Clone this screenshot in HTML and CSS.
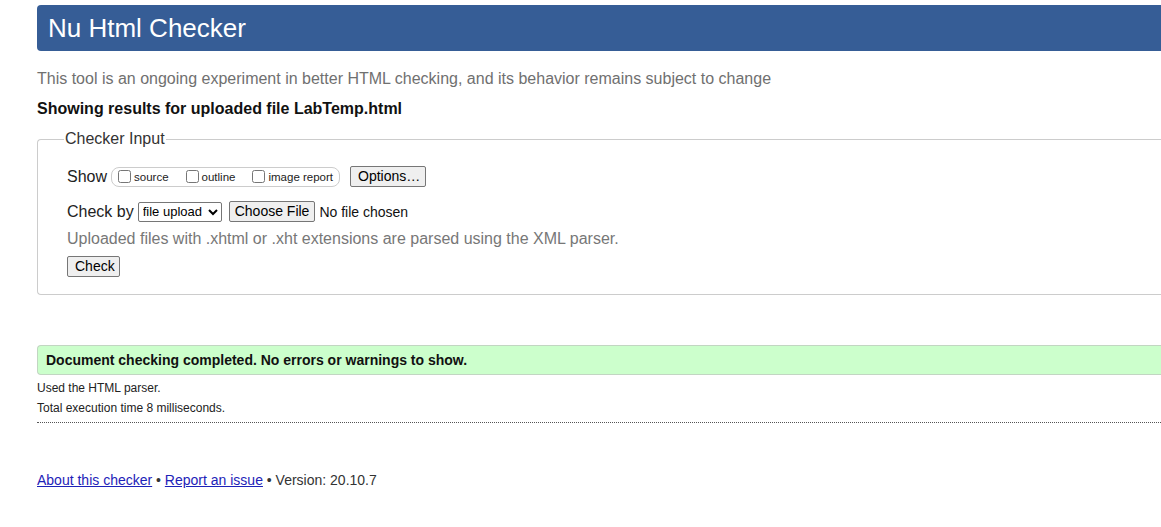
FILE: index.html
```html
<!DOCTYPE html>
<html>
<head>
<meta charset="utf-8">
<title>Nu Html Checker</title>
<link rel="stylesheet" href="styles.css">
</head>
<body>
<div class="page">
  <h1 class="banner">Nu Html Checker</h1>
  <p class="intro">This tool is an ongoing experiment in better HTML checking, and its behavior remains subject to change</p>
  <p class="showing">Showing results for uploaded file LabTemp.html</p>
  <fieldset class="input">
    <legend>Checker Input</legend>
    <div class="row row-show">
      <span class="lbl">Show</span>
      <span class="group">
        <label class="opt"><input type="checkbox">source</label>
        <label class="opt"><input type="checkbox">outline</label>
        <label class="opt"><input type="checkbox">image report</label>
      </span>
      <button class="btn btn-options">Options…</button>
    </div>
    <div class="row row-by">
      <span class="lbl">Check by</span>
      <select class="sel"><option>file upload</option></select>
      <button class="btn btn-file">Choose File</button>
      <span class="nofile">No file chosen</span>
    </div>
    <p class="hint">Uploaded files with .xhtml or .xht extensions are parsed using the XML parser.</p>
    <button class="btn btn-check">Check</button>
  </fieldset>
  <p class="success">Document checking completed. No errors or warnings to show.</p>
  <p class="details">Used the HTML parser.</p>
  <p class="details">Total execution time 8 milliseconds.</p>
  <hr class="dots">
  <p class="footer"><a href="#">About this checker</a> • <a href="#">Report an issue</a> • Version: 20.10.7</p>
</div>
</body>
</html>
```
FILE: styles.css
```css
html, body {
  margin: 0;
  padding: 0;
  background: #fff;
  overflow: hidden;
}
body {
  font-family: "Liberation Sans", Arial, sans-serif;
  color: #222;
}
.page {
  padding: 5px 0 0 37px;
  width: 1160px;
}
.banner {
  margin: 0;
  height: 46px;
  line-height: 46px;
  background: #365d96;
  color: #fff;
  font-size: 26px;
  font-weight: normal;
  padding-left: 11px;
  border-radius: 4px 0 0 4px;
}
.intro {
  margin: 19px 0 0;
  font-size: 16px;
  line-height: 18px;
  color: #707070;
}
.showing {
  margin: 12px 0 0;
  font-size: 16px;
  line-height: 18px;
  font-weight: bold;
  color: #111;
}
.input {
  margin: 12px 0 0;
  padding: 18px 29px 17px 29px;
  border: 1px solid #ccc;
  border-radius: 4px 0 0 4px;
  border-right: none;
}
.input legend {
  font-size: 16px;
  color: #333;
  padding: 0 1px;
  margin-left: -3px;
}
.row {
  display: flex;
  align-items: center;
  font-size: 16px;
  color: #222;
  white-space: nowrap;
}
.lbl {
  margin-right: 4px;
}
.group {
  display: inline-flex;
  align-items: center;
  border: 1px solid #ccc;
  border-radius: 8px;
  height: 18px;
  padding: 0 6px 0 5px;
  margin-right: 10px;
  font-size: 11.5px;
}
.opt {
  display: inline-flex;
  align-items: center;
  margin-right: 16px;
}
.opt:last-child {
  margin-right: 0;
}
.opt input {
  margin: 0 3px 0 1px;
  width: 13px;
  height: 13px;
}
.btn {
  font-family: "Liberation Sans", Arial, sans-serif;
  font-size: 14px;
  background: #efefef;
  border: 1px solid #767676;
  border-radius: 2px;
  color: #000;
  padding: 1px 7px;
  height: 21px;
  line-height: 17px;
  white-space: nowrap;
}
.btn-options {
  width: 76px;
}
.row-by {
  margin-top: 14px;
}
.sel {
  font-family: "Liberation Sans", Arial, sans-serif;
  font-size: 13px;
  height: 20px;
  width: 84px;
  border: 1px solid #767676;
  border-radius: 2px;
  background: #fff;
  color: #000;
  margin-right: 7px;
  padding: 0;
}
.btn-file {
  margin-right: 4px;
  padding: 1px 5px;
}
.nofile {
  font-size: 14px;
  color: #111;
}
.hint {
  margin: 8px 0 0;
  font-size: 16px;
  line-height: 18px;
  color: #777;
}
.btn-check {
  margin-top: 8px;
  width: 53px;
}
.success {
  margin: 50px 0 0;
  height: 28px;
  line-height: 28px;
  padding-left: 8px;
  background: #ccffcc;
  border: 1px solid #c2d6c2;
  border-right: none;
  border-radius: 4px 0 0 4px;
  font-size: 14px;
  font-weight: bold;
  color: #111;
}
.details {
  margin: 6px 0 0;
  font-size: 12px;
  line-height: 14px;
  color: #222;
}
.dots {
  margin: 7px 0 0;
  border: none;
  border-top: 1px dotted #555;
  height: 0;
}
.footer {
  margin: 49px 0 0;
  font-size: 14px;
  color: #333;
}
.footer a {
  color: #1d22b8;
}
```
